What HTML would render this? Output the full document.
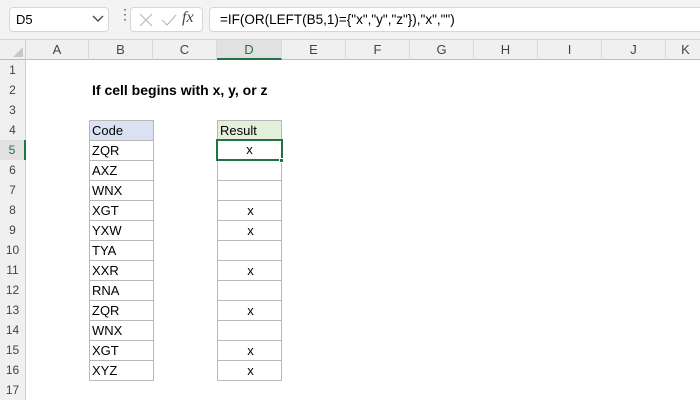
<!DOCTYPE html>
<html><head><style>
*{margin:0;padding:0;box-sizing:border-box}
body{width:700px;height:400px;overflow:hidden;background:#fff;font-family:"Liberation Sans",Calibri,sans-serif;font-size:13px;color:#000;position:relative}
.a{position:absolute}
.top{left:0;top:0;width:700px;height:40px;background:#f3f3f3;border-bottom:1px solid #d4d4d4}
.box{background:#fff;border:1px solid #d6d6d6;border-radius:4px}
.ch{top:40px;height:20px;background:#f0f0f0;border-right:1px solid #d9d9d9;border-bottom:1px solid #bdbdbd;text-align:center;line-height:20px;color:#444}
.rh{left:0;width:26px;height:20px;background:#f0f0f0;border-right:1px solid #d0d0d0;text-align:center;line-height:20px;color:#444;font-size:12px}
.c{height:21px;border:1px solid #b8b8b8;line-height:19px;padding-left:2px}
</style></head><body>
<div class="a top"></div>
<div class="a box" style="left:9px;top:7px;width:100px;height:25px;line-height:23px;padding-left:6px">D5</div>
<svg class="a" style="left:92px;top:15px" width="12" height="8"><path d="M1 1 L6 6 L11 1" stroke="#444" fill="none" stroke-width="1.3"/></svg>
<div class="a" style="left:118px;top:12px;color:#555;font-size:14px;line-height:5px">⋮</div>
<div class="a box" style="left:130px;top:7px;width:73px;height:25px"></div>
<svg class="a" style="left:138px;top:12px" width="60" height="16"><path d="M2 2L14 14M14 2L2 14" stroke="#bbb" stroke-width="1.2"/><path d="M24 8L29 13L38 3" stroke="#bbb" stroke-width="1.2" fill="none"/></svg>
<div class="a" style="left:182px;top:9px;font-family:'Liberation Serif',serif;font-style:italic;font-size:16px;color:#444">fx</div>
<div class="a box" style="left:209px;top:7px;width:500px;height:25px;line-height:23px;padding-left:10px;font-size:13.5px">=IF(OR(LEFT(B5,1)={"x","y","z"}),"x","")</div>
<div class="a" style="left:0;top:40px;width:26px;height:20px;background:#f0f0f0;border-right:1px solid #d0d0d0;border-bottom:1px solid #bdbdbd"></div>
<svg class="a" style="left:12px;top:46px" width="12" height="12"><path d="M11 1L11 11L1 11Z" fill="#c8c8c8"/></svg>
<div class="a ch" style="left:26px;width:63px">A</div>
<div class="a ch" style="left:89px;width:64px">B</div>
<div class="a ch" style="left:153px;width:64px">C</div>
<div class="a ch" style="left:217px;width:65px;background:#e1e1e1;border-bottom:2px solid #217346;color:#217346">D</div>
<div class="a ch" style="left:282px;width:64px">E</div>
<div class="a ch" style="left:346px;width:64px">F</div>
<div class="a ch" style="left:410px;width:64px">G</div>
<div class="a ch" style="left:474px;width:64px">H</div>
<div class="a ch" style="left:538px;width:64px">I</div>
<div class="a ch" style="left:602px;width:64px">J</div>
<div class="a ch" style="left:666px;width:40px">K</div>
<div class="a rh" style="top:60px">1</div><div class="a rh" style="top:80px">2</div><div class="a rh" style="top:100px">3</div><div class="a rh" style="top:120px">4</div>
<div class="a rh" style="top:140px;background:#e1e1e1;border-right:2px solid #217346;color:#217346">5</div>
<div class="a rh" style="top:160px">6</div><div class="a rh" style="top:180px">7</div><div class="a rh" style="top:200px">8</div><div class="a rh" style="top:220px">9</div><div class="a rh" style="top:240px">10</div><div class="a rh" style="top:260px">11</div><div class="a rh" style="top:280px">12</div><div class="a rh" style="top:300px">13</div><div class="a rh" style="top:320px">14</div><div class="a rh" style="top:340px">15</div><div class="a rh" style="top:360px">16</div><div class="a rh" style="top:380px">17</div>
<div class="a" style="left:92px;top:82px;font-weight:bold;font-size:14px">If cell begins with x, y, or z</div>
<div class="a c" style="left:89px;top:120px;width:65px;background:#d9e1f2">Code</div>
<div class="a c" style="left:217px;top:120px;width:65px;background:#e2efda">Result</div>
<div class="a c" style="left:89px;top:140px;width:65px">ZQR</div>
<div class="a c" style="left:89px;top:160px;width:65px">AXZ</div>
<div class="a c" style="left:89px;top:180px;width:65px">WNX</div>
<div class="a c" style="left:89px;top:200px;width:65px">XGT</div>
<div class="a c" style="left:89px;top:220px;width:65px">YXW</div>
<div class="a c" style="left:89px;top:240px;width:65px">TYA</div>
<div class="a c" style="left:89px;top:260px;width:65px">XXR</div>
<div class="a c" style="left:89px;top:280px;width:65px">RNA</div>
<div class="a c" style="left:89px;top:300px;width:65px">ZQR</div>
<div class="a c" style="left:89px;top:320px;width:65px">WNX</div>
<div class="a c" style="left:89px;top:340px;width:65px">XGT</div>
<div class="a c" style="left:89px;top:360px;width:65px">XYZ</div>
<div class="a c" style="left:217px;top:160px;width:65px"></div>
<div class="a c" style="left:217px;top:180px;width:65px"></div>
<div class="a c" style="left:217px;top:200px;width:65px;text-align:center">x</div>
<div class="a c" style="left:217px;top:220px;width:65px;text-align:center">x</div>
<div class="a c" style="left:217px;top:240px;width:65px"></div>
<div class="a c" style="left:217px;top:260px;width:65px;text-align:center">x</div>
<div class="a c" style="left:217px;top:280px;width:65px"></div>
<div class="a c" style="left:217px;top:300px;width:65px;text-align:center">x</div>
<div class="a c" style="left:217px;top:320px;width:65px"></div>
<div class="a c" style="left:217px;top:340px;width:65px;text-align:center">x</div>
<div class="a c" style="left:217px;top:360px;width:65px;text-align:center">x</div>
<div class="a" style="left:216px;top:139px;width:67px;height:22px;border:2px solid #217346;text-align:center;line-height:18px">x</div>
<div class="a" style="left:279px;top:158px;width:5px;height:5px;background:#217346;border:1px solid #fff"></div>
</body></html>
